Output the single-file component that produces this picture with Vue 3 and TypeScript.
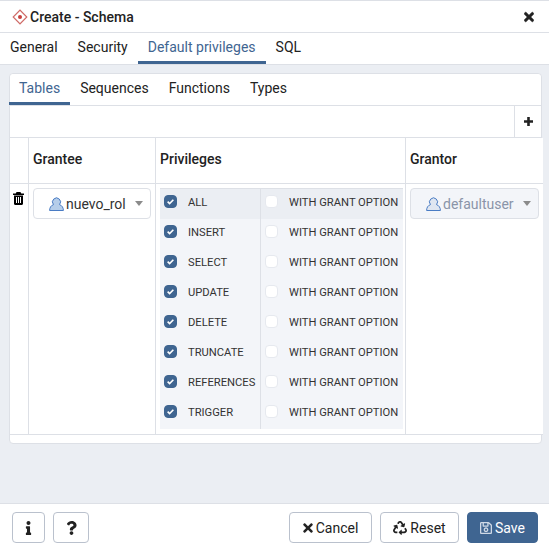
<script setup lang="ts">
import { ref } from 'vue'

const mainTabs = ['General', 'Security', 'Default privileges', 'SQL']
const subTabs = ['Tables', 'Sequences', 'Functions', 'Types']
const activeMain = ref('Default privileges')
const activeSub = ref('Tables')

const privileges = ['ALL', 'INSERT', 'SELECT', 'UPDATE', 'DELETE', 'TRUNCATE', 'REFERENCES', 'TRIGGER']
</script>

<template>
  <div class="dialog">
    <header class="title-bar">
      <svg class="schema-icon" viewBox="0 0 16 16" width="16" height="16">
        <rect x="3.2" y="3.2" width="9.6" height="9.6" transform="rotate(45 8 8)" fill="#fff" stroke="#cf6a66" stroke-width="1.2" />
        <circle cx="8" cy="8" r="2" fill="#c8403c" />
      </svg>
      <span class="title">Create - Schema</span>
      <svg class="close" viewBox="0 0 352 512" width="10" height="14">
        <path d="M242.72 256l100.07-100.07c12.28-12.28 12.28-32.19 0-44.48l-22.24-22.24c-12.28-12.28-32.19-12.28-44.48 0L176 189.28 75.93 89.21c-12.28-12.28-32.19-12.28-44.48 0L9.21 111.45c-12.28 12.28-12.28 32.19 0 44.48L109.28 256 9.21 356.07c-12.28 12.28-12.28 32.19 0 44.48l22.24 22.24c12.28 12.28 32.2 12.28 44.48 0L176 322.72l100.07 100.07c12.28 12.28 32.2 12.28 44.48 0l22.24-22.24c12.28-12.28 12.28-32.19 0-44.48L242.72 256z" />
      </svg>
    </header>

    <nav class="tabs main-tabs">
      <a v-for="tab in mainTabs" :key="tab" class="tab" :class="{ active: tab === activeMain }">{{ tab }}</a>
    </nav>

    <main class="content">
      <section class="card">
        <nav class="tabs sub-tabs">
          <a v-for="tab in subTabs" :key="tab" class="tab" :class="{ active: tab === activeSub }">{{ tab }}</a>
        </nav>

        <div class="toolbar">
          <button class="add-btn" type="button">
            <svg viewBox="0 0 9 9" width="9" height="9">
              <path d="M3.2 0h2.6v3.2H9v2.6H5.8V9H3.2V5.8H0V3.2h3.2z" />
            </svg>
          </button>
        </div>

        <div class="grid">
          <div class="cell head"></div>
          <div class="cell head">Grantee</div>
          <div class="cell head">Privileges</div>
          <div class="cell head last">Grantor</div>

          <div class="cell body trash-cell">
            <svg viewBox="0 0 11 13" width="11" height="13">
              <path d="M3.6 0h3.8l.9 1.500H11V3H0V1.500h2.700zM1 3.600h9v8.200c0 .7-.5 1.200-1.200 1.200H2.200C1.500 13 1 12.500 1 11.800zM3 5v6h1V5zm2 0v6h1V5zm2 0v6h1V5z" fill-rule="evenodd" />
            </svg>
          </div>

          <div class="cell body">
            <div class="select">
              <svg class="user-icon" viewBox="0 0 15 14" width="15" height="14">
                <path d="M.6 13.500c0-2.800 1.300-5 3.900-5.900a4 4 0 1 1 6 0c2.600.9 3.900 3.100 3.900 5.900z" fill="#b5cde9" stroke="#4a7cc4" stroke-width="1" />
              </svg>
              <span>nuevo_rol</span>
              <i class="caret"></i>
            </div>
          </div>

          <div class="cell body">
            <div class="priv-block">
              <div v-for="(name, i) in privileges" :key="name" class="priv-row" :class="{ highlight: i === 0 }">
                <div class="priv-col name-col">
                  <span class="check on">
                    <svg viewBox="0 0 12 12" width="9" height="9">
                      <path d="M2.200 6.200l2.600 2.600 5-5.200" fill="none" stroke="#fff" stroke-width="2.200" />
                    </svg>
                  </span>
                  <span class="priv-label">{{ name }}</span>
                </div>
                <div class="priv-col grant-col">
                  <span class="check"></span>
                  <span class="priv-label">WITH GRANT OPTION</span>
                </div>
              </div>
            </div>
          </div>

          <div class="cell body last">
            <div class="select disabled">
              <svg class="user-icon" viewBox="0 0 15 14" width="15" height="14">
                <path d="M.6 13.500c0-2.800 1.300-5 3.900-5.900a4 4 0 1 1 6 0c2.600.9 3.900 3.100 3.900 5.900z" fill="#dfe6f1" stroke="#4a7cc4" stroke-width="1" />
              </svg>
              <span>defaultuser</span>
              <i class="caret"></i>
            </div>
          </div>
        </div>
      </section>
    </main>

    <footer class="footer">
      <button class="btn icon-only info" type="button">
        <svg viewBox="0 0 192 512" width="7" height="14">
          <path d="M20 424.229h20V279.771H20c-11.046 0-20-8.954-20-20V212c0-11.046 8.954-20 20-20h112c11.046 0 20 8.954 20 20v212.229h20c11.046 0 20 8.954 20 20V492c0 11.046-8.954 20-20 20H20c-11.046 0-20-8.954-20-20v-47.771c0-11.046 8.954-20 20-20zM96 0C56.235 0 24 32.235 24 72s32.235 72 72 72 72-32.235 72-72S135.764 0 96 0z" />
        </svg>
      </button>
      <button class="btn icon-only help" type="button">
        <svg viewBox="0 0 384 512" width="11" height="14">
          <path d="M202.021 0C122.202 0 70.503 32.703 29.914 91.026c-7.363 10.58-5.093 25.086 5.178 32.874l43.138 32.709c10.373 7.865 25.132 6.026 33.253-4.148 25.049-31.381 43.63-49.449 82.757-49.449 30.764 0 68.816 19.799 68.816 49.631 0 22.552-18.617 34.134-48.993 51.164-35.423 19.86-82.299 44.576-82.299 106.405V320c0 13.255 10.745 24 24 24h72.471c13.255 0 24-10.745 24-24v-5.773c0-42.86 125.268-44.645 125.268-160.627C377.504 66.256 286.902 0 202.021 0zM192 373.459c-38.196 0-69.271 31.075-69.271 69.271 0 38.195 31.075 69.27 69.271 69.27s69.271-31.075 69.271-69.271-31.075-69.27-69.271-69.27z" />
        </svg>
      </button>
      <div class="spacer"></div>
      <button class="btn cancel" type="button">
        <svg viewBox="0 0 352 512" width="10" height="14">
          <path d="M242.72 256l100.07-100.07c12.28-12.28 12.28-32.19 0-44.48l-22.24-22.24c-12.28-12.28-32.19-12.28-44.48 0L176 189.28 75.93 89.21c-12.28-12.28-32.19-12.28-44.48 0L9.21 111.45c-12.28 12.28-12.28 32.19 0 44.48L109.28 256 9.21 356.07c-12.28 12.28-12.28 32.19 0 44.48l22.24 22.24c12.28 12.28 32.2 12.28 44.48 0L176 322.72l100.07 100.07c12.28 12.28 32.2 12.28 44.48 0l22.24-22.24c12.28-12.28 12.28-32.19 0-44.48L242.72 256z" />
        </svg>
        Cancel
      </button>
      <button class="btn reset" type="button">
        <svg viewBox="0 0 512 512" width="14" height="14">
          <path d="M184.561 261.903c3.232 13.997-12.123 24.635-24.068 17.168l-40.736-25.455-50.867 81.402C55.606 356.273 70.96 384 96.012 384H148c6.627 0 12 5.373 12 12v40c0 6.627-5.373 12-12 12H96.115c-75.334 0-121.302-83.048-81.408-146.88l50.822-81.388-40.725-25.448c-12.081-7.547-8.966-25.961 4.879-29.158l110.237-25.45c8.611-1.988 17.201 3.381 19.189 11.99l25.452 110.237zm98.561-182.915l41.289 66.076-40.74 25.457c-12.051 7.528-9 25.953 4.879 29.158l110.237 25.45c8.672 1.999 17.215-3.438 19.189-11.99l25.45-110.237c3.197-13.844-11.99-24.719-24.068-17.168l-40.687 25.424-41.263-66.082c-37.521-60.033-125.209-60.171-162.816 0l-17.963 28.766c-3.51 5.62-1.8 13.021 3.82 16.533l33.919 21.195c5.62 3.512 13.024 1.803 16.536-3.817l17.961-28.743c12.712-20.341 41.973-19.676 54.257-.022zM497.288 301.12l-27.541-44.108c-3.51-5.62-10.911-7.329-16.531-3.819l-33.88 21.164c-5.62 3.51-7.33 10.91-3.82 16.53l27.575 44.163C455.179 356.203 440.004 384 415.988 384H320V336c0-14.247-17.23-21.371-27.314-11.314l-80 80c-6.248 6.248-6.248 16.379 0 22.627l80 80C302.704 517.331 320 510.3 320 496v-48h95.88c75.274 0 121.335-82.997 81.408-146.88z" />
        </svg>
        Reset
      </button>
      <button class="btn save" type="button">
        <svg viewBox="0 0 448 512" width="12" height="14">
          <path d="M433.941 129.941l-83.882-83.882A48 48 0 0 0 316.118 32H48C21.49 32 0 53.49 0 80v352c0 26.51 21.49 48 48 48h352c26.51 0 48-21.49 48-48V163.882a48 48 0 0 0-14.059-33.941zM272 80v80H144V80h128zm122 352H54a6 6 0 0 1-6-6V86a6 6 0 0 1 6-6h42v104c0 13.255 10.745 24 24 24h176c13.255 0 24-10.745 24-24V83.882l78.243 78.243a6 6 0 0 1 1.757 4.243V426a6 6 0 0 1-6 6zM224 232c-48.523 0-88 39.477-88 88s39.477 88 88 88 88-39.477 88-88-39.477-88-88-88zm0 128c-22.056 0-40-17.944-40-40s17.944-40 40-40 40 17.944 40 40-17.944 40-40 40z" />
        </svg>
        Save
      </button>
    </footer>
  </div>
</template>

<style>
html,
body {
  margin: 0;
  overflow: hidden;
}
</style>

<style scoped>
.dialog {
  width: 549px;
  height: 550px;
  box-sizing: border-box;
  display: flex;
  flex-direction: column;
  border-top: 1px solid #dde0e6;
  font-family: Roboto, sans-serif;
  font-size: 14px;
  color: #222;
  background: #fff;
  overflow: hidden;
}

.title-bar {
  height: 31px;
  flex: none;
  display: flex;
  align-items: center;
  padding: 0 15px 0 12px;
  border-bottom: 1px solid #dde0e6;
}

.schema-icon {
  flex: none;
  margin-right: 2px;
}

.title {
  font-weight: 500;
  flex: 1;
}

.close {
  fill: #222;
  stroke: #222;
  stroke-width: 20;
}

.tabs {
  display: flex;
  flex: none;
  height: 31px;
  background: #fff;
  border-bottom: 1px solid #dde0e6;
}

.tab {
  padding: 0 10px;
  line-height: 29px;
  height: 31px;
  box-sizing: border-box;
  border-bottom: 3px solid transparent;
  white-space: nowrap;
}

.sub-tabs {
  border-radius: 4px 4px 0 0;
}

.sub-tabs .tab:first-child {
  margin-left: -1px;
}

.tab.active {
  color: #3f6591;
  border-bottom-color: #3f6591;
}

.content {
  flex: 1;
  background: #ebeef3;
  padding: 8px 7px 0 9px;
  border-bottom: 1px solid #dde0e6;
  min-height: 0;
}

.card {
  width: 533px;
  box-sizing: border-box;
  height: 371px;
  background: #fff;
  border: 1px solid #dde0e6;
  border-radius: 4px;
}

.toolbar {
  height: 31px;
  display: flex;
  justify-content: flex-end;
  border-bottom: 1px solid #dde0e6;
}

.add-btn {
  width: 27px;
  padding: 0;
  background: #fff;
  border: 0;
  border-left: 1px solid #dde0e6;
  display: flex;
  align-items: center;
  justify-content: center;
}

.add-btn svg {
  fill: #222;
}

.grid {
  width: 533px;
  display: grid;
  grid-template-columns: 19px 127px 250px 137px;
  grid-template-rows: 46px 251px;
  background: #fff;
}

.cell {
  box-sizing: border-box;
  border-right: 1px solid #dde0e6;
  border-bottom: 1px solid #dde0e6;
}

.cell.last {
  border-right: 0;
}

.head {
  font-weight: 500;
  padding-left: 4px;
  line-height: 43px;
}

.body {
  padding: 4px;
}

.trash-cell {
  padding: 8px 0 0 3px;
}

.trash-cell svg {
  fill: #000;
  display: block;
}

.select {
  height: 31px;
  box-sizing: border-box;
  display: flex;
  align-items: center;
  border: 1px solid #dde0e6;
  border-radius: 4px;
  padding-left: 15px;
  background: #fff;
  color: #333;
  white-space: nowrap;
}

.select.disabled {
  background: #f3f5f9;
  color: #8a94a8;
}

.user-icon {
  flex: none;
  margin-right: 2px;
}

.caret {
  margin-left: auto;
  margin-right: 7px;
  border-left: 4px solid transparent;
  border-right: 4px solid transparent;
  border-top: 5px solid #8b8b8b;
}

.priv-block {
  width: 243px;
  border-top: 1px solid #dde0e6;
  background: #f3f5f9;
}

.priv-row {
  display: flex;
  height: 30px;
}

.priv-row.highlight {
  background: #ebeef3;
}

.priv-col {
  display: flex;
  align-items: center;
  box-sizing: border-box;
  padding: 0 0 4px 4px;
}

.name-col {
  width: 101px;
  border-right: 1px solid #dde0e6;
}

.grant-col {
  flex: 1;
}

.check {
  width: 13px;
  height: 13px;
  flex: none;
  box-sizing: border-box;
  margin: -1px 11px 0 0;
  border: 1px solid #e6e9ef;
  border-radius: 4px;
  background: #fff;
  display: flex;
  align-items: center;
  justify-content: center;
}

.check.on {
  background: #3f6591;
  border-color: #3f6591;
}

.priv-label {
  font-size: 11.2px;
  color: #333;
  white-space: nowrap;
}

.footer {
  height: 46px;
  flex: none;
  box-sizing: border-box;
  display: flex;
  padding: 8px 11px 7px 12px;
  gap: 8px;
  background: #fff;
}

.spacer {
  flex: 1;
}

.btn {
  box-sizing: border-box;
  height: 31px;
  margin: 0;
  display: flex;
  align-items: center;
  justify-content: center;
  gap: 3px;
  padding: 0;
  font-family: inherit;
  font-size: 14px;
  color: #222;
  background: #fff;
  border: 1px solid #bac1cd;
  border-radius: 4px;
}

.btn svg {
  fill: #222;
}

.info {
  width: 33px;
}

.help {
  width: 36px;
}

.cancel {
  width: 83px;
}

.reset {
  width: 79px;
}

.save {
  width: 71px;
  color: #fff;
  background: #3f6591;
  border-color: #3f6591;
}

.save svg {
  fill: #cfd9e6;
}
</style>
